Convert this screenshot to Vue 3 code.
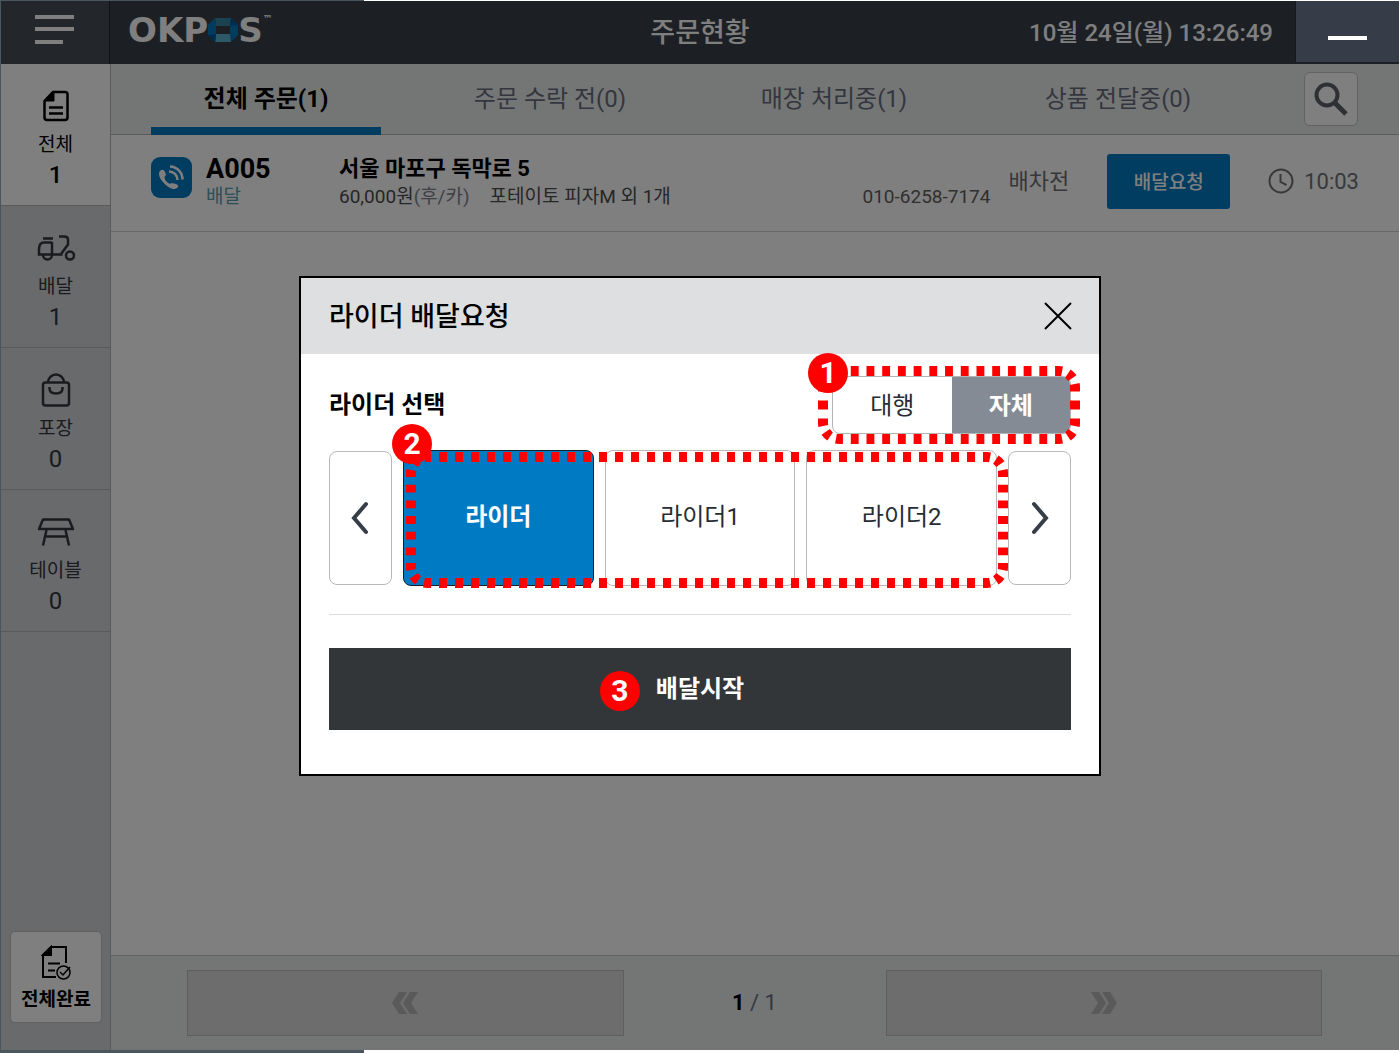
<template>
  <div class="page">
    <header class="topbar">
      <div class="topbar-left">
        <button class="menu-btn" type="button" aria-label="메뉴">
          <svg width="40" height="30" viewBox="0 0 40 30" fill="#fff">
            <rect x="0" y="0" width="39" height="4" />
            <rect x="0" y="12" width="39" height="4" />
            <rect x="0" y="25" width="28" height="4" />
          </svg>
        </button>
        <div class="logo">
          <span>OKP</span>
          <svg width="30" height="24" viewBox="0 0 30 24">
            <path d="M7 0h16l-1 8H8z" fill="#3484a0" />
            <path d="M23 0l7 7v10l-7 7-1-8V8z" fill="#0078bb" />
            <path d="M7 24h16l-1-8H8z" fill="#58b0d0" />
            <path d="M7 0L0 7v10l7 7 1-8V8z" fill="#0078bb" />
            <path d="M23 0l7 7-8 1zM0 17l7 7 1-8z" fill="#0058a0" />
          </svg>
          <span>S</span>
          <sup>™</sup>
        </div>
      </div>
      <h1>주문현황</h1>
      <div class="topbar-right">
        <time>10월 24일(월) 13:26:49</time>
        <button class="minimize-btn" type="button" aria-label="최소화"><i></i></button>
      </div>
    </header>

    <div class="body">
      <aside class="sidebar">
        <nav>
          <button
            v-for="menu in menus"
            :key="menu.id"
            type="button"
            :class="['side-btn', { active: menuActive === menu.id }]"
            @click="menuActive = menu.id"
          >
            <svg v-if="menu.id === 'all'" width="26" height="32" viewBox="0 0 26 32" fill="none" stroke="currentColor" stroke-width="2.500">
              <path d="M10 2h12a2.500 2.500 0 0 1 2.500 2.500v23a2.500 2.500 0 0 1-2.500 2.500H4a2.500 2.500 0 0 1-2.500-2.500V11z" />
              <path d="M2 11L11 2v9z" fill="currentColor" stroke-width="1" />
              <path d="M6 17.500h14M6 23.500h14" />
            </svg>
            <svg v-else-if="menu.id === 'delivery'" width="40" height="32" viewBox="0 0 40 32" fill="none" stroke="currentColor" stroke-width="2.500">
              <path d="M7 6.500h10" />
              <path d="M16 10.500H8q-5 0-5 7v5h23.500M16 10v13" />
              <path d="M23 4.500h5q4 0 4 3v5L25 22" />
              <path d="M7 23a4.500 4.500 0 0 0 9 0" />
              <circle cx="34" cy="23.500" r="4" />
            </svg>
            <svg v-else-if="menu.id === 'pickup'" width="30" height="36" viewBox="0 0 30 36" fill="none" stroke="currentColor" stroke-width="2.500">
              <rect x="2" y="10.500" width="26" height="23" rx="2.500" />
              <path d="M7 10.500a8 8 0 0 1 16 0M8.500 15v1.500q0 5 6.500 5t6.500-5V15" />
            </svg>
            <svg v-else width="38" height="32" viewBox="0 0 38 32" fill="none" stroke="currentColor" stroke-width="2.500" stroke-linejoin="round">
              <path d="M6 3.500h26l4 9.500H2z" />
              <path d="M9.500 14L6 29.500M28.500 14L32 29.500M8.500 20.500h21" />
            </svg>
            <span class="side-label">{{ menu.label }}</span>
            <span class="side-count">{{ menu.count }}</span>
          </button>
        </nav>
        <button class="done-btn" type="button">
          <svg width="30" height="36" viewBox="0 0 30 36" fill="none" stroke="currentColor" stroke-width="2">
            <path d="M25 18V2H10L2 10v22h13" />
            <path d="M2 10L10 2v8z" fill="currentColor" />
            <path d="M7 18.500h12M7 25.500h7" />
            <circle cx="22.500" cy="27.500" r="6.500" stroke-width="1.500" />
            <path d="M19 27l3 3 7-8" stroke-width="1.500" />
          </svg>
          <span>전체완료</span>
        </button>
      </aside>

      <main class="content">
        <div class="tab-row">
          <div class="tabs" role="tablist">
            <button
              v-for="tab in tabs"
              :key="tab"
              type="button"
              role="tab"
              :class="['tab', { active: tabActive === tab }]"
              @click="tabActive = tab"
            >
              {{ tab }}
            </button>
          </div>
          <button class="search-btn" type="button" aria-label="검색">
            <svg width="34" height="34" viewBox="0 0 34 34" fill="none" stroke="currentColor">
              <circle cx="13" cy="13" r="10.500" stroke-width="4" />
              <path d="M20.500 20.500L32 32" stroke-width="5" />
            </svg>
          </button>
        </div>

        <section class="order">
          <svg class="call-icon" width="41" height="41" viewBox="0 0 41 41">
            <rect width="41" height="41" rx="9" fill="#007bc3" />
            <path d="M9 14q3-3 5 1l1 3q-3 2 0 6 3 4 6 2l4 1q4 2 1 4-4 3-10-2-8-7-8-12 0-2 1-3z" fill="#fff" />
            <path d="M19 9.500a13 13 0 0 1 12.500 13M18 14.500a8.500 8.500 0 0 1 8.500 8.500" fill="none" stroke="#fff" stroke-width="2.500" />
          </svg>
          <div class="order-no">
            <strong>A005</strong>
            <span>배달</span>
          </div>
          <div class="order-info">
            <strong>서울 마포구 독막로 5</strong>
            <p><span>60,000원<em>(후/카)</em></span><span>포테이토 피자M 외 1개</span></p>
          </div>
          <span class="phone">010-6258-7174</span>
          <span class="state">배차전</span>
          <button class="request-btn" type="button">배달요청</button>
          <span class="elapsed">
            <svg width="26" height="26" viewBox="0 0 26 26" fill="none" stroke="currentColor" stroke-width="2">
              <circle cx="13" cy="13" r="11.500" />
              <path d="M12.500 6v8l6 3" />
            </svg>
            10:03
          </span>
        </section>

        <div class="blank"></div>

        <footer class="pager">
          <button type="button" aria-label="이전 페이지">
            <svg width="26" height="22" viewBox="0 0 26 22" fill="currentColor">
              <path d="M7 0h8L8 11l7 11H7L0 11zM18 0h8l-7 11 7 11h-8l-7-11z" />
            </svg>
          </button>
          <span class="page-no"><b>1</b> / 1</span>
          <button type="button" aria-label="다음 페이지">
            <svg width="26" height="22" viewBox="0 0 26 22" fill="currentColor">
              <path d="M0 0h8l7 11-7 11H0l7-11zM11 0h8l7 11-7 11h-8l7-11z" />
            </svg>
          </button>
        </footer>
      </main>
    </div>

    <div class="dim">
      <div class="modal" role="dialog" aria-labelledby="modal-title">
        <div class="modal-header">
          <h2 id="modal-title">라이더 배달요청</h2>
          <button type="button" aria-label="닫기">
            <svg width="28" height="28" viewBox="0 0 28 28" stroke="#000" stroke-width="2">
              <path d="M1 1l26 26M27 1L1 27" />
            </svg>
          </button>
        </div>

        <div class="modal-body">
          <div class="select-row">
            <h3>라이더 선택</h3>
            <div class="toggle">
              <button
                v-for="type in types"
                :key="type"
                type="button"
                :class="{ active: typeActive === type }"
                @click="typeActive = type"
              >
                {{ type }}
              </button>
              <svg class="guide" width="262" height="78" viewBox="0 0 262 78">
                <path v-for="s in guideSides(262, 78, 14, 2)" :key="s.d" :d="s.d" :pathLength="s.len" />
              </svg>
              <span class="badge">1</span>
            </div>
          </div>

          <div class="riders">
            <button class="arrow" type="button" aria-label="이전">
              <svg width="20" height="34" viewBox="0 0 20 34"><path d="M15 3L3 17l12 14" /></svg>
            </button>
            <div class="rider-list">
              <button
                v-for="rider in riders"
                :key="rider"
                type="button"
                :class="['rider', { active: riderActive === rider }]"
                @click="riderActive = rider"
              >
                {{ rider }}
              </button>
              <svg class="guide" width="602" height="136" viewBox="0 0 602 136">
                <path v-for="s in guideSides(602, 136, 35, 6)" :key="s.d" :d="s.d" :pathLength="s.len" />
              </svg>
              <span class="badge">2</span>
            </div>
            <button class="arrow" type="button" aria-label="다음">
              <svg width="20" height="34" viewBox="0 0 20 34"><path d="M4 3l12 14L4 31" /></svg>
            </button>
          </div>

          <button class="start-btn" type="button">
            <span class="start-label"><span class="badge">3</span>배달시작</span>
          </button>
        </div>
      </div>
    </div>
  </div>
</template>

<script setup>
import { ref } from 'vue'

const menus = [
  { id: 'all', label: '전체', count: 1 },
  { id: 'delivery', label: '배달', count: 1 },
  { id: 'pickup', label: '포장', count: 0 },
  { id: 'table', label: '테이블', count: 0 },
]
const tabs = ['전체 주문(1)', '주문 수락 전(0)', '매장 처리중(1)', '상품 전달중(0)']
const types = ['대행', '자체']
const riders = ['라이더', '라이더1', '라이더2']

const menuActive = ref('all')
const tabActive = ref(tabs[0])
const typeActive = ref('자체')
const riderActive = ref('라이더')

// 점선 안내 테두리: 변과 모서리를 나눠서 점선이 모서리에 맞게 떨어지도록 한다
const guideSides = (w, h, nx, ny) => {
  const a = 5
  const r = 21
  return [
    { d: `M${r} ${a}H${w - r}`, len: nx * 2 },
    { d: `M${r} ${h - a}H${w - r}`, len: nx * 2 },
    { d: `M${a} ${r}V${h - r}`, len: ny * 2 },
    { d: `M${w - a} ${r}V${h - r}`, len: ny * 2 },
    { d: `M${a} ${r}A16 16 0 0 1 ${r} ${a}`, len: 4 },
    { d: `M${w - r} ${a}A16 16 0 0 1 ${w - a} ${r}`, len: 4 },
    { d: `M${w - a} ${h - r}A16 16 0 0 1 ${w - r} ${h - a}`, len: 4 },
    { d: `M${r} ${h - a}A16 16 0 0 1 ${a} ${h - r}`, len: 4 },
  ]
}
</script>

<style>
body {
  margin: 0;
  background: #fff;
}
</style>

<style scoped>
.page {
  display: flex;
  flex-direction: column;
  box-sizing: border-box;
  min-height: 100vh;
  padding: 1px 1px 3px;
  background: linear-gradient(90deg, #4a565e 26%, #fff 26%);
  color: #000;
  font-family: Roboto, 'Noto Sans CJK KR', sans-serif;
}

button {
  margin: 0;
  padding: 0;
  border: none;
  background: none;
  color: inherit;
  font: inherit;
  cursor: pointer;
}

h1,
h2,
h3,
p {
  margin: 0;
}

svg {
  display: block;
}

/* 상단바 */
.topbar {
  display: grid;
  grid-template-columns: 1fr auto 1fr;
  align-items: center;
  height: 63px;
  background: #383e48;
  color: #fff;
}

.topbar-left,
.topbar-right {
  display: flex;
  align-items: center;
  height: 63px;
}

.topbar-right {
  justify-content: flex-end;
}

.topbar h1 {
  padding-bottom: 4px;
  font-size: 27px;
  font-weight: 500;
}

.menu-btn {
  display: flex;
  align-items: center;
  justify-content: center;
  width: 109px;
  height: 63px;
  padding-bottom: 6px;
  border-right: 1px solid #20242a;
  box-sizing: border-box;
  background: #464c56;
}

.logo {
  display: flex;
  align-items: center;
  height: 30px;
  margin: 0 0 6px 18px;
  font-family: 'DejaVu Sans', sans-serif;
  font-size: 34px;
  font-weight: bold;
  line-height: 30px;
}

.logo sup {
  align-self: flex-start;
  font-size: 10px;
  line-height: 8px;
}

.topbar time {
  margin-right: 22px;
  padding-bottom: 4px;
  font-size: 24px;
  font-weight: 500;
}

.minimize-btn {
  display: flex;
  align-items: center;
  justify-content: center;
  position: relative;
  z-index: 20;
  width: 104px;
  height: 61px;
  margin-bottom: 2px;
  padding-top: 12px;
  box-sizing: border-box;
  border-left: 1px solid #15181c;
  background: #373d48;
}

.minimize-btn i {
  width: 39px;
  height: 4px;
  background: #fff;
}

.body {
  display: flex;
  flex: 1;
}

/* 왼쪽 메뉴 */
.sidebar {
  display: flex;
  flex-direction: column;
  justify-content: space-between;
  width: 110px;
  box-sizing: border-box;
  border-right: 1px solid #b4b5b6;
  background: #d2d4d8;
}

.side-btn {
  display: flex;
  flex-direction: column;
  align-items: center;
  width: 100%;
  height: 142px;
  padding-top: 24px;
  box-sizing: border-box;
  border-bottom: 1px solid #b4b5b6;
  color: #32373c;
}

.side-btn svg {
  height: 36px;
  margin-bottom: 7px;
}

.side-btn.active {
  background: #fff;
  color: #000;
}

.side-label {
  font-size: 19px;
  line-height: 28px;
}

.side-count {
  font-size: 24px;
  line-height: 32px;
}

.active .side-count {
  font-weight: 500;
}

.done-btn {
  display: flex;
  flex-direction: column;
  align-items: center;
  justify-content: center;
  gap: 6px;
  height: 92px;
  margin: 0 8px 27px 9px;
  padding-top: 4px;
  border: 1px solid #c0c0c0;
  border-radius: 5px;
  background: #fff;
  font-size: 19px;
  font-weight: bold;
  line-height: 26px;
}

/* 본문 */
.content {
  display: flex;
  flex: 1;
  flex-direction: column;
  background: #fff;
}

.tab-row {
  display: flex;
  align-items: center;
  gap: 44px;
  height: 70px;
  padding: 0 41px 0 13px;
  border-bottom: 1px solid #b8b8b8;
  background: #e8ecea;
}

.tabs {
  display: flex;
  flex: 1;
  align-self: stretch;
  margin-bottom: -1px;
}

.tab {
  flex: 1;
  margin: 0 27px;
  padding-top: 2px;
  border-bottom: 8px solid transparent;
  color: #686c7e;
  font-size: 24px;
  white-space: nowrap;
}

.tab.active {
  border-color: #007bc3;
  color: #000;
  font-weight: bold;
}

.search-btn {
  display: flex;
  align-items: center;
  justify-content: center;
  width: 54px;
  height: 54px;
  box-sizing: border-box;
  border: 1px solid #c4c4c4;
  border-radius: 6px;
  background: #fff;
  color: #5c6068;
}

.order {
  display: flex;
  align-items: center;
  height: 96px;
  padding: 0 40px;
  border-bottom: 1px solid #d0d0d0;
  white-space: nowrap;
}

.call-icon {
  margin-bottom: 12px;
}

.order-no,
.order-info {
  display: flex;
  flex-direction: column;
  font-size: 19px;
  line-height: 28px;
}

.order-no {
  width: 133px;
  margin-left: 14px;
  color: #5aa0ac;
}

.order-no strong {
  color: #000;
  font-size: 27px;
  font-weight: bold;
}

.order-info {
  flex: 1;
  color: #4c4c4c;
}

.order-info strong {
  color: #000;
  font-size: 22px;
  font-weight: bold;
}

.order-info p {
  display: flex;
  gap: 20px;
}

.order-info em {
  color: #80828a;
  font-style: normal;
}

.phone {
  align-self: flex-end;
  margin-bottom: 20px;
  color: #606060;
  font-size: 19px;
  line-height: 28px;
}

.state {
  margin: 0 38px 8px 18px;
  color: #6c6e74;
  font-size: 22px;
}

.request-btn {
  width: 123px;
  height: 55px;
  margin-right: 38px;
  margin-bottom: 4px;
  padding-bottom: 2px;
  border-radius: 3px;
  background: #007bc3;
  color: #fff;
  font-size: 19px;
  font-weight: 500;
}

.elapsed {
  display: flex;
  align-items: center;
  gap: 10px;
  margin-bottom: 4px;
  color: #707274;
  font-size: 22px;
}

.blank {
  flex: 1;
}

.pager {
  display: flex;
  align-items: center;
  height: 94px;
  padding: 0 77px 0 76px;
  border-top: 1px solid #c4c4c4;
  background: #e8ecea;
}

.pager button {
  display: flex;
  align-items: center;
  justify-content: center;
  flex: 1;
  height: 66px;
  border: 1px solid #bcbcbc;
  box-sizing: border-box;
  background: #dadada;
  color: #b4b4b4;
}

.page-no {
  width: 262px;
  padding-bottom: 2px;
  color: #686c7e;
  font-size: 22px;
  text-align: center;
}

.page-no b {
  color: #000;
}

/* 라이더 배달요청 팝업 */
.dim {
  display: flex;
  align-items: center;
  justify-content: center;
  position: fixed;
  inset: 1px 1px 3px;
  z-index: 10;
  background: rgba(0, 0, 0, 0.5);
}

.modal {
  width: 798px;
  border: 2px solid #000;
  background: #fff;
}

.modal-header {
  display: flex;
  align-items: center;
  justify-content: space-between;
  height: 76px;
  padding: 0 27px 0 28px;
  background: #dedfe1;
}

.modal-header h2 {
  padding-bottom: 2px;
  font-size: 27px;
  font-weight: 500;
}

.modal-body {
  padding: 22px 28px 44px;
}

.select-row {
  display: flex;
  align-items: center;
  justify-content: space-between;
}

.select-row h3 {
  padding-bottom: 4px;
  font-size: 24px;
  font-weight: bold;
}

.toggle {
  display: flex;
  position: relative;
  width: 239px;
  height: 58px;
  box-sizing: border-box;
  border: 1px solid #b4b4b4;
  border-radius: 8px;
  color: #282c34;
  font-size: 24px;
}

.toggle button {
  flex: 1;
  padding-bottom: 2px;
}

.toggle button.active {
  border-radius: 0 7px 7px 0;
  background: #858b95;
  color: #fff;
  font-weight: bold;
}

.guide {
  position: absolute;
  fill: none;
  stroke: #f00;
  stroke-width: 10px;
  stroke-dasharray: 1 1;
  stroke-dashoffset: 0.5;
  pointer-events: none;
}

.toggle .guide {
  top: -11px;
  left: -15px;
}

.toggle .badge {
  top: -24px;
  left: -25px;
}

.badge {
  position: absolute;
  width: 40px;
  height: 40px;
  border-radius: 50%;
  background: #f00;
  color: #fff;
  font-size: 30px;
  font-weight: bold;
  line-height: 40px;
  text-align: center;
}

.riders {
  display: flex;
  align-items: center;
  gap: 11px;
  padding: 16px 0 28px;
  border-bottom: 1px solid #dcdcdc;
}

.arrow,
.rider {
  box-sizing: border-box;
  border: 1px solid #b8b8b8;
  border-radius: 8px;
}

.arrow {
  display: flex;
  align-items: center;
  justify-content: center;
  width: 63px;
  height: 134px;
}

.arrow path {
  fill: none;
  stroke: #363e48;
  stroke-width: 4px;
  stroke-linecap: round;
}

.rider-list {
  display: flex;
  flex: 1;
  gap: 11px;
  position: relative;
}

.rider {
  flex: 1;
  height: 136px;
  padding-bottom: 6px;
  color: #282c34;
  font-size: 24px;
}

.rider.active {
  border-color: #10202c;
  background: #007bc3;
  color: #fff;
  font-weight: bold;
}

.rider-list .guide {
  top: 2px;
  left: 3px;
}

.rider-list .badge {
  top: -26px;
  left: -11px;
}

.start-btn {
  width: 100%;
  height: 82px;
  margin-top: 33px;
  padding-bottom: 4px;
  background: #323639;
  color: #fff;
  font-size: 24px;
  font-weight: bold;
}

.start-label {
  position: relative;
}

.start-label .badge {
  top: -4px;
  left: -56px;
}
</style>
